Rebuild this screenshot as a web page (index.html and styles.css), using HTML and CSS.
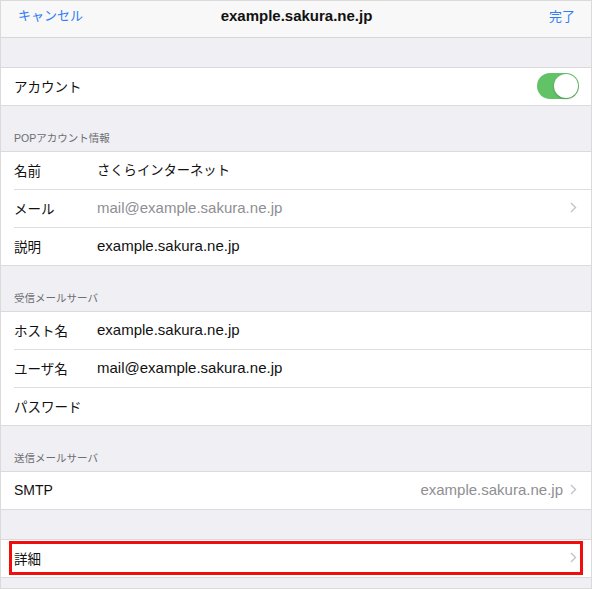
FILE: index.html
```html
<!DOCTYPE html>
<html lang="ja">
<head>
<meta charset="utf-8">
<title>example.sakura.ne.jp</title>
<link rel="stylesheet" href="styles.css">
</head>
<body>
<div class="screen">
  <header class="nav">
    <span class="nav-btn left">キャンセル</span>
    <span class="title">example.sakura.ne.jp</span>
    <span class="nav-btn right">完了</span>
  </header>

  <div class="gap"></div>

  <section class="group">
    <div class="row">
      <span class="label">アカウント</span>
      <span class="spacer"></span>
      <span class="toggle"><span class="knob"></span></span>
    </div>
  </section>

  <div class="section-head">POPアカウント情報</div>
  <section class="group">
    <div class="row"><span class="label">名前</span><span class="val jp">さくらインターネット</span></div>
    <div class="row"><span class="label">メール</span><span class="val muted">mail@example.sakura.ne.jp</span>
      <svg class="chev" viewBox="0 0 7 11" width="7" height="11"><path d="M1 1 L5.5 5.5 L1 10" /></svg></div>
    <div class="row"><span class="label">説明</span><span class="val">example.sakura.ne.jp</span></div>
  </section>

  <div class="section-head">受信メールサーバ</div>
  <section class="group">
    <div class="row"><span class="label">ホスト名</span><span class="val">example.sakura.ne.jp</span></div>
    <div class="row"><span class="label">ユーザ名</span><span class="val">mail@example.sakura.ne.jp</span></div>
    <div class="row"><span class="label">パスワード</span><span class="val"></span></div>
  </section>

  <div class="section-head">送信メールサーバ</div>
  <section class="group">
    <div class="row"><span class="label latin">SMTP</span><span class="val muted right">example.sakura.ne.jp</span>
      <svg class="chev" viewBox="0 0 7 11" width="7" height="11"><path d="M1 1 L5.5 5.5 L1 10" /></svg></div>
  </section>

  <div class="gap"></div>

  <section class="group highlight">
    <div class="row"><span class="label">詳細</span><span class="spacer"></span>
      <svg class="chev" viewBox="0 0 7 11" width="7" height="11"><path d="M1 1 L5.5 5.5 L1 10" /></svg></div>
  </section>
</div>
</body>
</html>
```

FILE: styles.css
```css
html, body {
  margin: 0;
  padding: 0;
  background: #ffffff;
}

body {
  font-family: "Liberation Sans", "Noto Sans CJK JP", sans-serif;
  color: #111111;
}

.screen {
  width: 592px;
  height: 589px;
  box-sizing: border-box;
  border: 1px solid #dadada;
  background: #efeff4;
  overflow: hidden;
}

.nav {
  height: 37px;
  box-sizing: border-box;
  border-bottom: 1px solid #d7d7db;
  background: #f8f8f8;
  display: grid;
  grid-template-columns: 1fr auto 1fr;
  align-items: center;
  padding: 0 16px 9px 17px;
}

.nav-btn {
  font-size: 13px;
  color: #327bf6;
}

.nav-btn.right {
  justify-self: end;
  position: relative;
  top: 1px;
}

.title {
  font-size: 15px;
  font-weight: bold;
  color: #111111;
  position: relative;
  top: 1px;
}

.gap {
  height: 29px;
}

.group {
  background: #ffffff;
  border-top: 1px solid #dadade;
  border-bottom: 1px solid #dadade;
}

.row {
  height: 35px;
  padding-bottom: 2px;
  margin-left: 13px;
  padding-right: 14px;
  display: flex;
  align-items: center;
}

.row + .row {
  border-top: 1px solid #dedee2;
}

.label {
  width: 83px;
  flex: none;
  font-size: 13.5px;
  color: #111111;
}

.label.latin {
  font-size: 14px;
}

.val {
  flex: 1;
  font-size: 15px;
  color: #111111;
  white-space: nowrap;
}

.val.jp {
  font-size: 13.3px;
}

.val.muted {
  color: #8e8e93;
}

.val.right {
  text-align: right;
}

.spacer {
  flex: 1;
}

.chev {
  flex: none;
  margin-left: 7px;
  fill: none;
  stroke: #c4c4c8;
  stroke-width: 1.4;
}

.toggle {
  flex: none;
  width: 42px;
  height: 26px;
  border-radius: 13px;
  background: #62c266;
  box-sizing: border-box;
  margin-right: -2px;
  margin-top: 1px;
  display: flex;
  align-items: center;
  justify-content: flex-end;
  padding-right: 1px;
}

.knob {
  width: 24px;
  height: 24px;
  border-radius: 50%;
  background: #ffffff;
  box-shadow: 0 1px 2px rgba(0, 0, 0, 0.25);
}

.section-head {
  height: 45px;
  box-sizing: border-box;
  display: flex;
  align-items: flex-end;
  padding: 0 0 5px 13px;
  font-size: 10.5px;
  line-height: 15px;
  color: #6d6d72;
}

.highlight {
  position: relative;
}

.highlight::after {
  content: "";
  position: absolute;
  top: 1px;
  left: 8px;
  right: 8px;
  bottom: 2px;
  border: 3px solid #f20d0d;
  pointer-events: none;
}
```
